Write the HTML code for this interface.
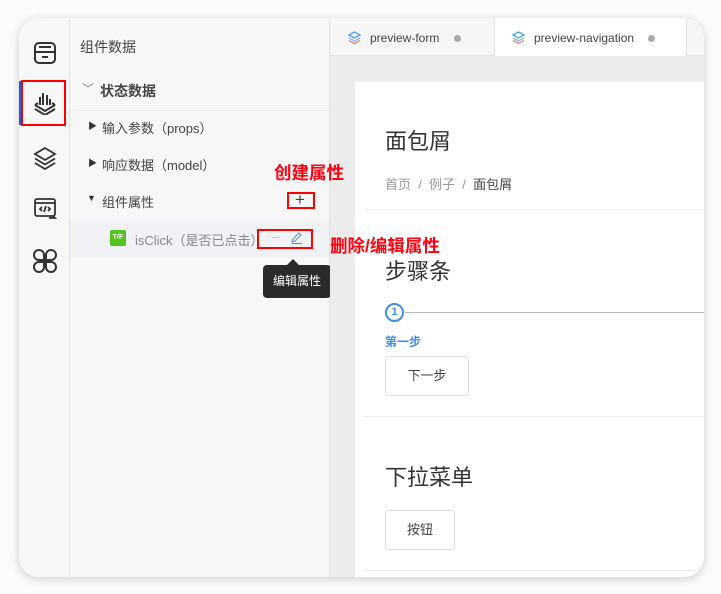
<!DOCTYPE html>
<html><head><meta charset="utf-8"><style>
*{box-sizing:border-box;margin:0;padding:0}
body{width:721px;height:594px;background:#fbfbfb;font-family:"Liberation Sans","Noto Sans CJK SC",sans-serif;position:relative;overflow:hidden;color:#333}
.win{position:absolute;left:19px;top:18px;width:685px;height:559px;border-radius:20px;background:#f5f5f5;box-shadow:0 2px 10px rgba(0,0,0,.18);overflow:hidden}
.bar{position:absolute;left:0;top:0;width:51px;height:100%;background:#f7f7f7;border-right:1px solid #e2e2e2}
.panel{position:absolute;left:51px;top:0;width:260px;height:100%;background:#f7f7f7;border-right:1px solid #e2e2e2}
.abs{position:absolute}
.t{position:absolute;font-size:13px;color:#444;white-space:nowrap}
.red{position:absolute;border:2px solid #f00;z-index:5}
.rt{position:absolute;color:#f01;font-weight:bold;font-size:17.5px;white-space:nowrap;z-index:5}
.tabs{position:absolute;left:311px;top:0;right:0;height:38px;background:#f6f6f6;border-bottom:1px solid #e4e4e4}
.canvas{position:absolute;left:311px;top:38px;right:0;bottom:0;background:#ececec}
.page{position:absolute;left:25px;top:26px;right:0;bottom:0;background:#fff}
.btn{position:absolute;border:1px solid #ddd;border-radius:3px;font-size:13px;color:#444;text-align:center}
</style></head><body>
<div class="win">
 <div class="bar">
  <svg class="abs" style="left:14px;top:23px" width="24" height="24" viewBox="0 0 24 24" fill="none" stroke="#333" stroke-width="2"><rect x="2" y="2" width="20" height="20" rx="4"/><path d="M6 6h12M2 11h20M9 16h6"/></svg>
  <div class="abs" style="left:0;top:63px;width:3px;height:44px;background:#1e5bd8"></div>
  <svg class="abs" style="left:13px;top:73px" width="26" height="24" viewBox="0 0 26 24" fill="none" stroke="#333" stroke-width="2"><path d="M3 14l10 6 10-6M6 12l-3 2M20 12l3 2"/><path d="M3 18l10 6 10-6" /><path d="M8 6v8M11 2v12M15 4v10M18 8v6"/></svg>
  <svg class="abs" style="left:14px;top:128px" width="24" height="24" viewBox="0 0 24 24" fill="none" stroke="#333" stroke-width="1.8"><path d="M12 2L2 8l10 6 10-6z"/><path d="M2 12.5l10 6 10-6M2 17l10 6 10-6"/></svg>
  <svg class="abs" style="left:14px;top:178px" width="24" height="24" viewBox="0 0 24 24" fill="none" stroke="#333" stroke-width="1.8"><rect x="2" y="3" width="20" height="17" rx="2"/><path d="M2 7h20M9 11l-2 2 2 2M15 11l2 2-2 2M13 10l-2 6M16 22h6l-2-2"/></svg>
  <svg class="abs" style="left:13px;top:230px" width="26" height="26" viewBox="0 0 26 26" fill="none" stroke="#333" stroke-width="2"><path d="M12 12H7a5 5 0 1 1 5-5zM14 12h5a5 5 0 1 0-5-5zM12 14H7a5 5 0 1 0 5 5zM14 14h5a5 5 0 1 1-5 5z"/></svg>
 </div>
 <div class="red" style="left:2px;top:62px;width:45px;height:46px"></div>
 <div class="panel">
  <div class="t" style="left:10px;top:19px;font-size:14px">组件数据</div>
  <div class="t" style="left:12px;top:62px;color:#888;font-size:12px">﹀</div>
  <div class="t" style="left:30px;top:63px;font-size:14px;font-weight:bold;color:#444">状态数据</div>
  <div class="abs" style="left:0;top:92px;width:259px;border-top:1px solid #ececec"></div>
  <div class="t" style="left:18px;top:101px;font-size:9px;color:#333">▶</div><div class="t" style="left:32px;top:100px">输入参数（props）</div>
  <div class="t" style="left:18px;top:138px;font-size:9px;color:#333">▶</div><div class="t" style="left:32px;top:137px">响应数据（model）</div>
  <div class="t" style="left:17px;top:175px;font-size:9px;color:#333">▼</div><div class="t" style="left:32px;top:174px">组件属性</div>
  <div class="t" style="left:225px;top:172px;font-size:17px;color:#444">+</div>
  <div class="abs" style="left:0;top:202px;width:259px;height:38px;background:#f0f2f5"></div>
  <div class="abs" style="left:40px;top:212px;width:16px;height:16px;background:#52c41a;border-radius:2px;color:#fff;font-size:7px;font-weight:bold;text-align:center;line-height:16px">T/F</div>
  <div class="t" style="left:65px;top:212px;color:#888">isClick（是否已点击）</div>
  <div class="t" style="left:202px;top:211px;color:#bbb">–</div>
  <svg class="abs" style="left:221px;top:214px" width="12" height="12" viewBox="0 0 12 12" fill="none" stroke="#4a90e2" stroke-width="1"><path d="M8 1l2 2-6 6-3 1 1-3zM1 11.5h10"/></svg>
  <div class="abs" style="left:217px;top:241px;width:0;height:0;border:6px solid transparent;border-bottom-color:#2b2b2b;border-top:0"></div>
  <div class="abs" style="left:193px;top:247px;width:68px;height:33px;background:#2b2b2b;border-radius:4px;color:#fff;font-size:12px;text-align:center;line-height:33px">编辑属性</div>
 </div>
 <div class="red" style="left:268px;top:174px;width:28px;height:17px"></div>
 <div class="red" style="left:238px;top:211px;width:56px;height:20px"></div>
 <div class="rt" style="left:255px;top:142px">创建属性</div>
 <div class="rt" style="left:311px;top:215px">删除/编辑属性</div>
 <div class="tabs">
  <svg class="abs" style="left:18px;top:13px" width="13" height="13" viewBox="0 0 13 13" fill="none" stroke-width="1.3"><path d="M6.5 1L1 4l5.5 3L12 4z" stroke="#4aa3f0"/><path d="M1 7l5.5 3L12 7" stroke="#8fb8e8"/><path d="M1 9.5l5.5 3 5.5-3" stroke="#f08080"/></svg>
  <div class="t" style="left:40px;top:13px;font-size:12px;color:#444">preview-form</div>
  <div class="abs" style="left:124px;top:17px;width:7px;height:7px;border-radius:50%;background:#aaa"></div>
  <div class="abs" style="left:164px;top:0;width:193px;height:38px;background:#fff;border-left:1px solid #e4e4e4;border-right:1px solid #e4e4e4"></div>
  <svg class="abs" style="left:182px;top:13px" width="13" height="13" viewBox="0 0 13 13" fill="none" stroke-width="1.3"><path d="M6.5 1L1 4l5.5 3L12 4z" stroke="#4aa3f0"/><path d="M1 7l5.5 3L12 7" stroke="#8fb8e8"/><path d="M1 9.5l5.5 3 5.5-3" stroke="#f08080"/></svg>
  <div class="t" style="left:204px;top:13px;font-size:12px;color:#444">preview-navigation</div>
  <div class="abs" style="left:318px;top:17px;width:7px;height:7px;border-radius:50%;background:#aaa"></div>
 </div>
 <div class="canvas"><div class="page">
  <div class="t" style="left:30px;top:42px;font-size:22px;color:#333">面包屑</div>
  <div class="t" style="left:30px;top:92px;color:#999">首页 &nbsp;/&nbsp; 例子 &nbsp;/&nbsp; <span style="color:#444">面包屑</span></div>
  <div class="abs" style="left:9px;top:127px;right:0;border-top:1px solid #eee"></div>
  <div class="t" style="left:30px;top:172px;font-size:22px;color:#333">步骤条</div>
  <div class="abs" style="left:30px;top:221px;width:19px;height:19px;border:2px solid #3d8ee8;border-radius:50%;color:#3d8ee8;font-size:11px;font-weight:bold;text-align:center;line-height:15px">1</div>
  <div class="abs" style="left:50px;top:230px;right:0;border-top:1px solid #bbb"></div>
  <div class="t" style="left:30px;top:251px;font-size:12px;color:#3d8ee8;font-weight:bold">第一步</div>
  <div class="btn" style="left:30px;top:274px;width:84px;height:40px;line-height:38px">下一步</div>
  <div class="abs" style="left:9px;top:334px;right:0;border-top:1px solid #eee"></div>
  <div class="t" style="left:30px;top:378px;font-size:22px;color:#333">下拉菜单</div>
  <div class="btn" style="left:30px;top:428px;width:70px;height:40px;line-height:38px">按钮</div>
  <div class="abs" style="left:9px;top:488px;right:0;border-top:1px solid #eee"></div>
 </div></div>
</div>
</body></html>
